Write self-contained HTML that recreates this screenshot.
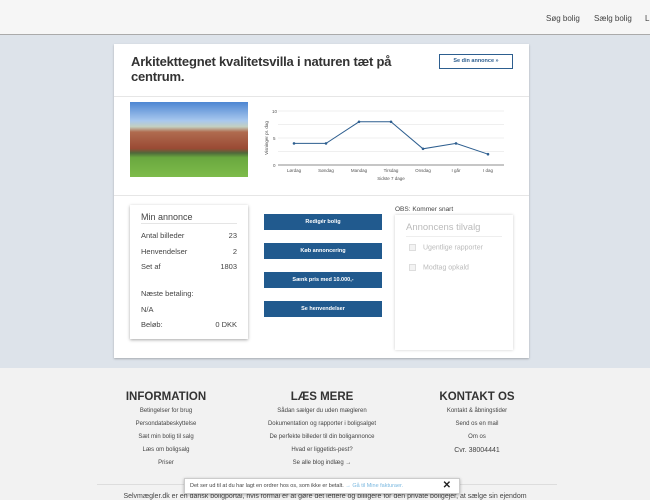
<!DOCTYPE html>
<html><head><meta charset="utf-8"><style>
*{margin:0;padding:0;box-sizing:border-box}
body{width:650px;height:500px;overflow:hidden;background:#dde3ea;font-family:"Liberation Sans",sans-serif;color:#333;position:relative}
.hdr{position:absolute;left:0;top:0;width:650px;height:35px;background:#f6f6f6;border-bottom:1px solid #aaa}
.hdr span{position:absolute;top:14px;font-size:8px;color:#444}
.card{position:absolute;left:114px;top:44px;width:415px;height:314px;background:#fff;box-shadow:0 1px 2px rgba(0,0,0,.25)}
.title{position:absolute;left:17px;top:10px;font-size:13px;font-weight:bold;line-height:15px;color:#333;width:280px;letter-spacing:-0.2px}
.sebtn{position:absolute;left:325px;top:10px;width:74px;height:15px;border:1px solid #2d5e8f;font-size:5.5px;color:#2d5e8f;text-align:center;line-height:13px;font-weight:bold}
.sep{position:absolute;left:0;top:52px;width:415px;height:1px;background:#e6e6e6}
.sep2{top:151px}
.img{position:absolute;left:16px;top:58px;width:118px;height:75px;background:linear-gradient(#4d86d2 0,#a8c8ee 25%,#c3cfc0 33%,#b06b4f 40%,#9a4a34 62%,#4f6a3a 68%,#6aa83f 74%,#7dbb4a 100%)}
.mini{position:absolute;left:16px;top:161px;width:118px;height:134px;background:#fff;box-shadow:0 1px 3px rgba(0,0,0,.35);font-size:7.5px;color:#444}
.mini div{position:absolute;left:11px;right:11px}
.mini b{font-weight:normal;float:right}
.btn{position:absolute;left:150px;width:118px;height:16px;background:#215a8e;color:#fff;font-size:5.5px;font-weight:bold;text-align:center;line-height:16px}
.opt{position:absolute;left:281px;top:171px;width:118px;height:135px;background:#fff;box-shadow:0 0 3px rgba(0,0,0,.2);font-size:7px;color:#bbb}
.cb{display:inline-block;width:7px;height:7px;border:1px solid #ddd;background:#f3f3f3;vertical-align:middle;margin-right:7px}
.foot{position:absolute;left:0;top:368px;width:650px;height:132px;background:#f2f2f2}
.col{position:absolute;top:23px;width:200px;text-align:center;font-size:6px;color:#444}
.col h3{font-size:11.5px;font-weight:bold;margin-bottom:5px;color:#333}
.col p{height:13px}
.toast{position:absolute;left:184px;top:478px;width:276px;height:16px;background:#fff;border:1px solid #ccc;box-shadow:0 1px 3px rgba(0,0,0,.3);font-size:5.5px;color:#444;line-height:14px;padding-left:5px}
</style></head><body>
<div class="hdr"><span style="left:546px">Søg bolig</span><span style="left:594px">Sælg bolig</span><span style="left:645px">L</span></div>
<div class="card">
<div class="title">Arkitekttegnet kvalitetsvilla i naturen tæt på centrum.</div>
<div class="sebtn">Se din annonce »</div>
<div class="sep"></div>
<div class="img"></div>
<svg style="position:absolute;left:140px;top:58px" width="260" height="85" viewBox="254 102 260 85">
<g stroke="#e0e0e0" stroke-width="0.6"><line x1="278" y1="111" x2="504" y2="111"/><line x1="278" y1="124.5" x2="504" y2="124.5"/><line x1="278" y1="138" x2="504" y2="138"/><line x1="278" y1="151.5" x2="504" y2="151.5"/></g>
<line x1="278" y1="165" x2="504" y2="165" stroke="#666" stroke-width="0.7"/>
<g font-size="4.5" fill="#555" font-family="Liberation Sans"><text x="272" y="113">10</text><text x="273" y="140">5</text><text x="273" y="167">0</text>
<text x="294" y="172" text-anchor="middle">Lørdag</text><text x="326" y="172" text-anchor="middle">Søndag</text><text x="359" y="172" text-anchor="middle">Mandag</text><text x="391" y="172" text-anchor="middle">Tirsdag</text><text x="423" y="172" text-anchor="middle">Onsdag</text><text x="456" y="172" text-anchor="middle">I går</text><text x="488" y="172" text-anchor="middle">I dag</text>
<text x="391" y="180" text-anchor="middle">Sidste 7 dage</text>
<text transform="translate(268,138) rotate(-90)" text-anchor="middle">Visninger pr. dag</text></g>
<polyline fill="none" stroke="#2d5e8f" stroke-width="1" points="294,143.4 326,143.4 359,121.8 391,121.8 423,148.8 456,143.4 488,154.2"/>
<g fill="#2d5e8f"><circle cx="294" cy="143.4" r="1.3"/><circle cx="326" cy="143.4" r="1.3"/><circle cx="359" cy="121.8" r="1.3"/><circle cx="391" cy="121.8" r="1.3"/><circle cx="423" cy="148.8" r="1.3"/><circle cx="456" cy="143.4" r="1.3"/><circle cx="488" cy="154.2" r="1.3"/></g>
</svg>
<div class="sep sep2"></div>
<div class="mini">
<div style="top:7px;font-size:9px;border-bottom:1px solid #e5e5e5;padding-bottom:1px">Min annonce</div>
<div style="top:26px">Antal billeder<b>23</b></div>
<div style="top:42px">Henvendelser<b>2</b></div>
<div style="top:57px">Set af<b>1803</b></div>
<div style="top:84px">Næste betaling:</div>
<div style="top:100px">N/A</div>
<div style="top:115px">Beløb:<b>0 DKK</b></div>
</div>
<div class="btn" style="top:170px">Redigér bolig</div>
<div class="btn" style="top:199px">Køb annoncering</div>
<div class="btn" style="top:228px">Sænk pris med 10.000,-</div>
<div class="btn" style="top:257px">Se henvendelser</div>
<div style="position:absolute;left:281px;top:162px;font-size:6.5px;color:#444">OBS: Kommer snart</div>
<div class="opt">
<div style="position:absolute;left:11px;right:11px;top:7px;font-size:9.5px;border-bottom:1px solid #eee;padding-bottom:3px">Annoncens tilvalg</div>
<div style="position:absolute;left:14px;top:29px"><span class="cb"></span>Ugentlige rapporter</div>
<div style="position:absolute;left:14px;top:49px"><span class="cb"></span>Modtag opkald</div>
</div>
</div>
<div class="foot">
<div class="col" style="left:66px"><h3>INFORMATION</h3><p>Betingelser for brug</p><p>Persondatabeskyttelse</p><p>Sæt min bolig til salg</p><p>Læs om boligsalg</p><p>Priser</p></div>
<div class="col" style="left:222px"><h3>LÆS MERE</h3><p>Sådan sælger du uden mægleren</p><p>Dokumentation og rapporter i boligsalget</p><p>De perfekte billeder til din boligannonce</p><p>Hvad er liggetids-pest?</p><p>Se alle blog indlæg →</p></div>
<div class="col" style="left:377px"><h3>KONTAKT OS</h3><p>Kontakt &amp; åbningstider</p><p>Send os en mail</p><p>Om os</p><p style="font-size:7px">Cvr. 38004441</p></div>
<div style="position:absolute;left:97px;top:116px;width:460px;height:1px;background:#ddd"></div>
<div style="position:absolute;left:0;top:125px;width:650px;text-align:center;font-size:7px;color:#444;white-space:nowrap">Selvmægler.dk er en dansk boligportal, hvis formål er at gøre det lettere og billigere for den private boligejer, at sælge sin ejendom</div>
</div>
<div class="toast">Det ser ud til at du har lagt en ordrer hos os, som ikke er betalt. <span style="color:#7ab8e0">→ Gå til Mine fakturaer.</span><span style="position:absolute;right:8px;top:0;font-size:10px;font-weight:bold;color:#222">✕</span></div>
</body></html>
